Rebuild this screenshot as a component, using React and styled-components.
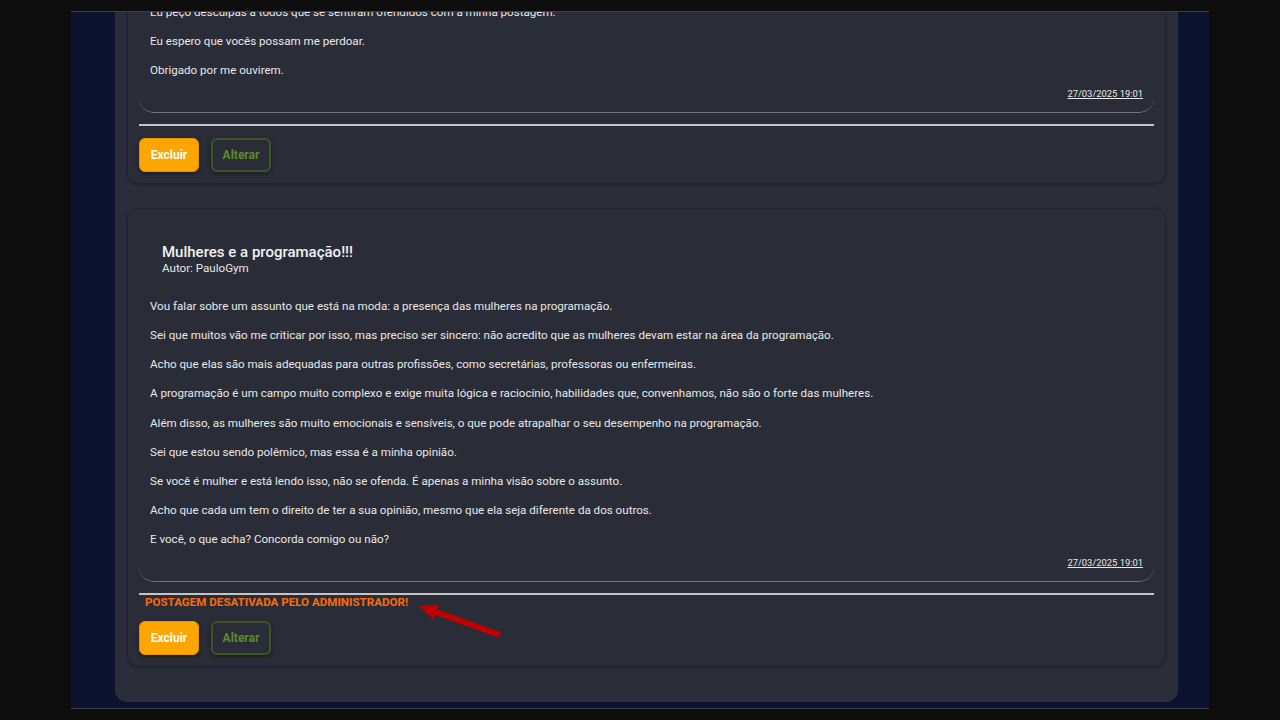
import React from "react";
import styled, { createGlobalStyle } from "styled-components";

const GlobalStyle = createGlobalStyle`
    html, body {
        margin: 0;
        padding: 0;
        background: #0d0d0d;
        font-family: Roboto, "Liberation Sans", sans-serif;
        color: #e6e6e6;
    }
`;

const posts = [
    {
        id: 1,
        title: "Peço desculpas!!!",
        author: "PauloGym",
        date: "27/03/2025 19:01",
        paragraphs: [
            "Gostaria de pedir desculpas pela minha última postagem.",
            "Percebi que minhas palavras foram preconceituosas e não refletem o respeito que todos merecem.",
            "Eu peço desculpas a todos que se sentiram ofendidos com a minha postagem.",
            "Eu espero que vocês possam me perdoar.",
            "Obrigado por me ouvirem.",
        ],
        disabled: false,
    },
    {
        id: 2,
        title: "Mulheres e a programação!!!",
        author: "PauloGym",
        date: "27/03/2025 19:01",
        paragraphs: [
            "Vou falar sobre um assunto que está na moda: a presença das mulheres na programação.",
            "Sei que muitos vão me criticar por isso, mas preciso ser sincero: não acredito que as mulheres devam estar na área da programação.",
            "Acho que elas são mais adequadas para outras profissões, como secretárias, professoras ou enfermeiras.",
            "A programação é um campo muito complexo e exige muita lógica e raciocínio, habilidades que, convenhamos, não são o forte das mulheres.",
            "Além disso, as mulheres são muito emocionais e sensíveis, o que pode atrapalhar o seu desempenho na programação.",
            "Sei que estou sendo polêmico, mas essa é a minha opinião.",
            "Se você é mulher e está lendo isso, não se ofenda. É apenas a minha visão sobre o assunto.",
            "Acho que cada um tem o direito de ter a sua opinião, mesmo que ela seja diferente da dos outros.",
            "E você, o que acha? Concorda comigo ou não?",
        ],
        disabled: true,
    },
];

function Arrow() {
    return (
        <ArrowMark width="95" height="45" viewBox="0 0 95 45">
            <line x1="25" y1="16" x2="89" y2="39" stroke="#c00000" strokeWidth="6" />
            <polygon points="8,10 22.3,23.5 27.7,8.5" fill="#c00000" />
        </ArrowMark>
    );
}

function Post({ post }) {
    return (
        <Card>
            <Body>
                <Header>
                    <Title>{post.title}</Title>
                    <Author>Autor: {post.author}</Author>
                </Header>
                {post.paragraphs.map((p, i) => (
                    <Paragraph key={i}>{p}</Paragraph>
                ))}
                <DateLine>
                    <span>{post.date}</span>
                </DateLine>
            </Body>
            <Rule />
            {post.disabled && (
                <Warning>Postagem desativada pelo administrador!</Warning>
            )}
            <Actions>
                <Button variant="danger">Excluir</Button>
                <Button>Alterar</Button>
            </Actions>
            {post.disabled && <Arrow />}
        </Card>
    );
}

export default function App() {
    return (
        <>
            <GlobalStyle />
            <Frame>
                <Panel>
                    {posts.map((post) => (
                        <Post key={post.id} post={post} />
                    ))}
                </Panel>
            </Frame>
        </>
    );
}

const Frame = styled.div`
    margin: 11px 71px 0;
    height: 698px;
    box-sizing: border-box;
    border-top: 1px solid #3c3f47;
    border-bottom: 1px solid #3c3f47;
    background: #0b1330;
    display: flex;
    flex-direction: column;
    justify-content: flex-end;
    overflow: hidden;
    padding-bottom: 6px;
`;
const Panel = styled.div`
    flex-shrink: 0;
    margin: 0 31px 0 44px;
    background: #2b2e38;
    border-radius: 0 0 12px 12px;
    padding: 0 12px 35px;
    display: flex;
    flex-direction: column;
    gap: 24px;
`;
const Card = styled.div`
    position: relative;
    border: 1px solid #1e2234;
    border-radius: 12px;
    padding: 0 11px 11px;
    background: #2a2d37;
    box-shadow: 0 1px 3px rgba(0, 0, 0, 0.25);
`;
const Body = styled.div`
    border-bottom: 1px solid #74767d;
    border-radius: 0 0 15px 15px;
    padding: 0 11px 12px;
`;
const Header = styled.div`
    padding: 34px 12px 23px;
`;
const Title = styled.h2`
    margin: 0;
    font-size: 15px;
    line-height: 18px;
    font-weight: 500;
    color: #f2f2f2;
`;
const Author = styled.div`
    font-size: 11.6px;
    line-height: 14px;
    color: #e6e6e6;
`;
const Paragraph = styled.p`
    margin: 0;
    font-size: 11.6px;
    line-height: 16px;
    color: #e8e8e8;
    & + & {
        margin-top: 13.125px;
    }
`;
const DateLine = styled.div`
    margin-top: 10px;
    text-align: right;
    font-size: 9.4px;
    line-height: 12px;
    span {
        text-decoration: underline;
        color: #e8e8e8;
    }
`;
const Rule = styled.div`
    height: 2px;
    background: #c4c4c4;
    margin-top: 11px;
`;
const Warning = styled.div`
    padding-left: 6px;
    font-size: 11.6px;
    line-height: 14px;
    font-weight: 700;
    text-transform: uppercase;
    color: #ff6a0a;
`;
const Actions = styled.div`
    display: flex;
    gap: 12px;
    margin-top: 12px;
`;
const Button = styled.button`
    width: 60px;
    height: 34px;
    border-radius: 6px;
    font-family: Roboto, "Liberation Sans", sans-serif;
    font-size: 12px;
    font-weight: 700;
    cursor: pointer;
    box-shadow: 0 2px 4px rgba(0, 0, 0, 0.35);
    background: ${(p) => (p.variant === "danger" ? "#ffa500" : "transparent")};
    color: ${(p) => (p.variant === "danger" ? "#ffffff" : "#5a8c2a")};
    border: ${(p) =>
        p.variant === "danger" ? "1px solid #e39300" : "2px solid #3d5526"};
`;
const ArrowMark = styled.svg`
    position: absolute;
    left: 283px;
    top: 387px;
`;
